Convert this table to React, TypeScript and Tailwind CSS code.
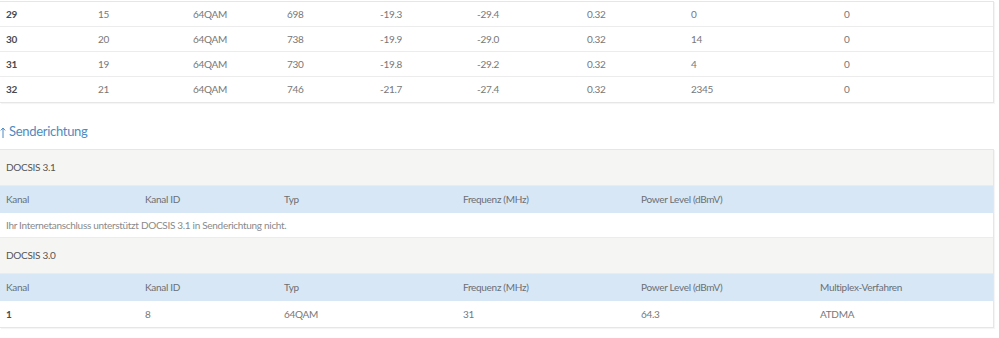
import React from 'react';

const font = { fontFamily: '"Source Sans Pro", Lato, "Noto Sans", sans-serif' };

type Row = string[];

const downRows: Row[] = [
    ['29', '15', '64QAM', '698', '-19.3', '-29.4', '0.32', '0', '0'],
    ['30', '20', '64QAM', '738', '-19.9', '-29.0', '0.32', '14', '0'],
    ['31', '19', '64QAM', '730', '-19.8', '-29.2', '0.32', '4', '0'],
    ['32', '21', '64QAM', '746', '-21.7', '-27.4', '0.32', '2345', '0'],
];

// column widths taken from where each column's text starts
const downCols = ['w-[92px]', 'w-[95px]', 'w-[94px]', 'w-[93px]', 'w-[97px]', 'w-[110px]', 'w-[104px]', 'w-[153px]', 'flex-1'];
const upCols = ['w-[139px]', 'w-[139px]', 'w-[179px]', 'w-[178px]', 'w-[179px]', 'flex-1'];

const upHead = ['Kanal', 'Kanal ID', 'Typ', 'Frequenz (MHz)', 'Power Level (dBmV)', 'Multiplex-Verfahren'];

function Cells({ cells, cols, boldFirst }: { cells: string[]; cols: string[]; boldFirst?: boolean }) {
    return (
        <>
            {cells.map((c, i) => (
                <div key={i} className={`${cols[i]} shrink-0 pl-[6px] ${i === 0 && boldFirst ? 'font-bold text-[#4a4a4a]' : ''}`}>
                    {c}
                </div>
            ))}
        </>
    );
}

function SectionTitle({ label }: { label: string }) {
    return (
        <div className="h-[36px] flex items-center pl-[6px] bg-[#f5f5f3] text-[#555] border-b border-[#ebebeb]">{label}</div>
    );
}

function HeadRow({ cells }: { cells: string[] }) {
    return (
        <div className="h-[27px] flex items-center bg-[#d8e7f5] text-[#6a6f75]">
            <Cells cells={cells} cols={upCols} />
        </div>
    );
}

export default function App() {
    return (
        <div className="w-[999px] h-[338px] bg-white text-[10px] tracking-[-0.3px] text-[#777] overflow-hidden" style={font}>
            <div className="w-[994px] mt-[1px] border-t border-r border-b border-[#e6e6e6] shadow-[1px_1px_1px_rgba(0,0,0,0.04)]">
                {downRows.map((r, i) => (
                    <div key={i} className={`h-[25px] flex items-center ${i < downRows.length - 1 ? 'border-b border-[#ececec]' : ''}`}>
                        <Cells cells={r} cols={downCols} boldFirst />
                    </div>
                ))}
            </div>

            <div className="h-[46px] flex items-end pb-[8px] text-[13px] tracking-[-0.3px] text-[#4f8ac0]">
                <svg width="6" height="11" viewBox="0 0 6 11" className="mr-[3px] mb-[3px]">
                    <path d="M3 1 V11 M0.8 3.4 L3 1 L5.2 3.4" fill="none" stroke="#4f8ac0" strokeWidth="1" />
                </svg>
                Senderichtung
            </div>

            <div className="w-[994px] border-t border-r border-b border-[#e6e6e6] shadow-[1px_1px_1px_rgba(0,0,0,0.04)]">
                <SectionTitle label="DOCSIS 3.1" />
                <HeadRow cells={upHead.slice(0, 5)} />
                <div className="h-[25px] flex items-center pl-[6px] text-[#8a8a8a] border-b border-[#ececec]">
                    Ihr Internetanschluss unterstützt DOCSIS 3.1 in Senderichtung nicht.
                </div>
                <SectionTitle label="DOCSIS 3.0" />
                <HeadRow cells={upHead} />
                <div className="h-[26px] flex items-center">
                    <Cells cells={['1', '8', '64QAM', '31', '64.3', 'ATDMA']} cols={upCols} boldFirst />
                </div>
            </div>
        </div>
    );
}
